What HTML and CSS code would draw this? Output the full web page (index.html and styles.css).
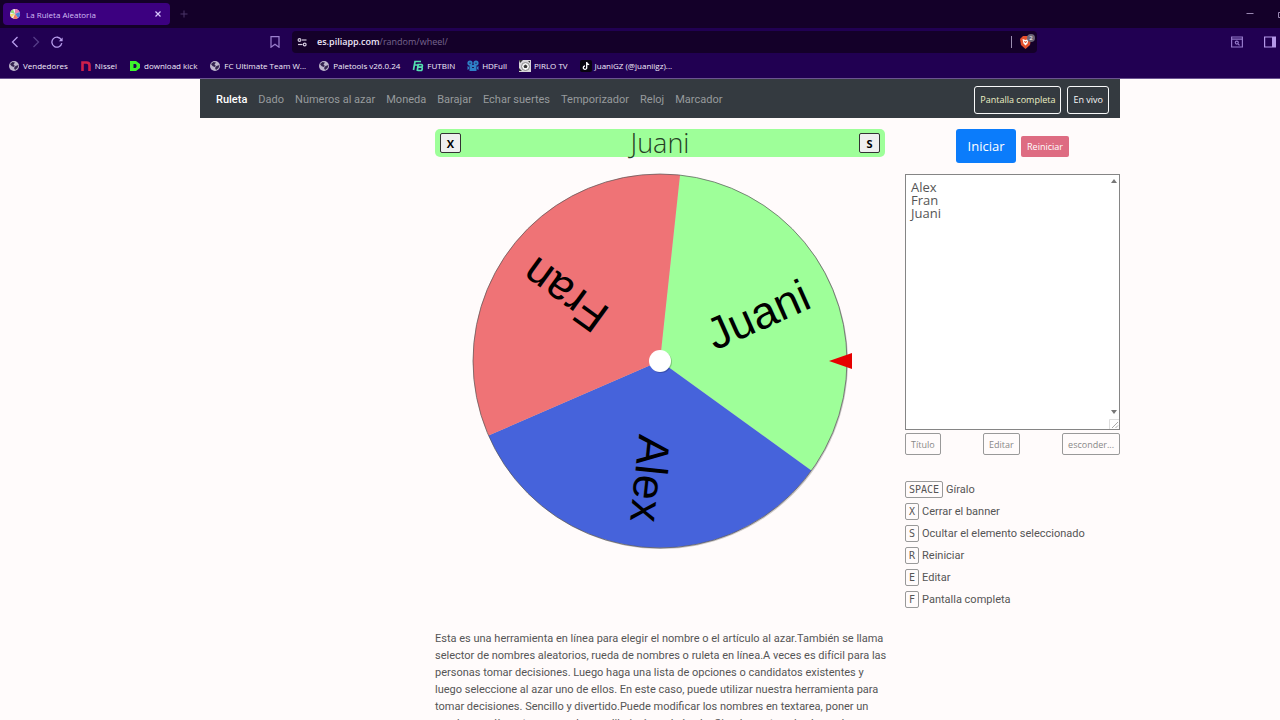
FILE: index.html
```
<!DOCTYPE html>
<html lang="es">
<head>
    <meta charset="UTF-8">
    <meta name="viewport" content="width=device-width, initial-scale=1.0">
    <title>La Ruleta Aleatoria</title>
    <link rel="stylesheet" href="styles.css">
</head>
<body>
    <svg class="symbols" aria-hidden="true">
        <symbol id="globe" viewBox="0 0 12 12">
            <circle cx="6" cy="6" r="5" fill="#bdb4cc"/>
            <path d="M2 4 L4.500 2 L7 2.500 L5.500 4.500 L7 6 L5.500 7 L3.500 6 Z M7.500 6 L10.500 5 L9.500 8 L7 10 L6 8 Z" fill="#33224f"/>
        </symbol>
    </svg>

    <header class="browser">
        <div class="tab-strip">
            <div class="tab">
                <svg class="icon" viewBox="0 0 12 12">
                    <circle cx="6" cy="6" r="5" fill="#f4e9f2"/>
                    <path d="M6 6 L6 1 A5 5 0 0 1 10.500 4 Z" fill="#e87fb0"/>
                    <path d="M6 6 L10.500 4 A5 5 0 0 1 9 10 Z" fill="#4c86d8"/>
                    <path d="M6 6 L9 10 A5 5 0 0 1 4 10.600 Z" fill="#ef7b5c"/>
                    <path d="M6 6 L1.200 4.500 A5 5 0 0 1 4 1.400 Z" fill="#8fdc79"/>
                    <path d="M6 6 L2.500 9.600 A5 5 0 0 1 1 6 Z" fill="#f2dc6b"/>
                </svg>
                <span class="tab-title">La Ruleta Aleatoria</span>
                <button class="icon-button" aria-label="Cerrar pestaña">
                    <svg class="icon-small" viewBox="0 0 8 8"><path d="M1.500 1.500 L6.500 6.500 M6.500 1.500 L1.500 6.500" stroke="#d9c8ff" stroke-width="1.200"/></svg>
                </button>
            </div>
            <button class="icon-button new-tab" aria-label="Nueva pestaña">
                <svg class="icon-small" viewBox="0 0 8 8"><path d="M4 0.500 V7.500 M0.500 4 H7.500" stroke="#4b3568"/></svg>
            </button>
            <div class="window-buttons">
                <button class="icon-button" aria-label="Minimizar">
                    <svg class="icon-small" viewBox="0 0 8 8"><path d="M0.500 3.500 H7.500" stroke="#9886b0"/></svg>
                </button>
                <button class="icon-button" aria-label="Restaurar">
                    <svg class="icon-small" viewBox="0 0 8 8"><path d="M0.500 2.500 H5.500 V7.500 H0.500 Z M2.500 2.500 V0.500 H7.500 V5.500 H5.500" fill="none" stroke="#9886b0"/></svg>
                </button>
            </div>
        </div>

        <div class="toolbar">
            <div class="history">
                <button class="icon-button" aria-label="Atrás">
                    <svg class="icon" viewBox="0 0 12 12"><path d="M8.500 1 L3.500 6 L8.500 11" fill="none" stroke="#b79cec" stroke-width="1.300"/></svg>
                </button>
                <button class="icon-button" aria-label="Adelante">
                    <svg class="icon" viewBox="0 0 12 12"><path d="M3.500 1 L8.500 6 L3.500 11" fill="none" stroke="#553b88" stroke-width="1.300"/></svg>
                </button>
                <button class="icon-button" aria-label="Recargar">
                    <svg class="icon" viewBox="0 0 12 12"><path d="M10.300 3.800 A5 5 0 1 0 10.800 7.200" fill="none" stroke="#b79cec" stroke-width="1.300"/><path d="M11.600 1.600 V5.200 H7.800 Z" fill="#b79cec"/></svg>
                </button>
                <button class="icon-button bookmark-button" aria-label="Guardar marcador">
                    <svg class="icon" viewBox="0 0 12 12"><path d="M2 0.700 H10 V11.200 L6 8.200 L2 11.200 Z" fill="none" stroke="#9c80cf" stroke-width="1.200"/></svg>
                </button>
            </div>
            <div class="address">
                <svg class="icon" viewBox="0 0 12 12" fill="none" stroke="#d4cbdf" stroke-width="1.200">
                    <circle cx="3.500" cy="4" r="1.400"/><path d="M6 4 H10.500"/>
                    <circle cx="8.700" cy="8.500" r="1.400"/><path d="M2 8.500 H6.500"/>
                </svg>
                <span class="url"><strong>es.piliapp.com</strong>/random/wheel/</span>
                <span class="shield">
                    <svg class="shield-icon" viewBox="0 0 16 16">
                        <path d="M4 2 L9 2 L12 5 L11 11 L6.500 15 L2 11 L1 5 Z" fill="#e5502d"/>
                        <path d="M3.500 5 L6.500 6 L9.500 5 L8.500 9.500 L6.500 11.500 L4.500 9.500 Z" fill="#fff"/>
                        <path d="M5.500 7 L6.500 9 L7.500 7" fill="none" stroke="#e5502d"/>
                        <circle cx="12" cy="4" r="4" fill="#6b6676"/>
                        <text x="12" y="6" font-size="6" text-anchor="middle" fill="#fff">2</text>
                    </svg>
                </span>
            </div>
            <div class="toolbar-end">
                <button class="icon-button" aria-label="Buscar en la página">
                    <svg class="icon" viewBox="0 0 12 12" fill="none" stroke="#9478c9" stroke-width="1.200"><path d="M0.600 1 H11.400 V11 H0.600 Z M0.600 3.200 H11.400"/><circle cx="5.800" cy="6.600" r="1.500"/><path d="M7 7.800 L8.500 9.300"/></svg>
                </button>
                <button class="icon-button" aria-label="Panel lateral">
                    <svg class="icon" viewBox="0 0 12 12"><path d="M0.600 1 H11.400 V11 H0.600 Z" fill="none" stroke="#b498e8" stroke-width="1.200"/><path d="M8 1 H12 V11 H8 Z" fill="#b498e8"/></svg>
                </button>
            </div>
        </div>

        <nav class="bookmarks" aria-label="Marcadores">
            <a href="#"><svg class="icon"><use href="#globe"/></svg>Vendedores</a>
            <a href="#"><svg class="icon" viewBox="0 0 12 12"><path d="M2.500 11 V2.500 H6.500 Q9.500 2.500 9.500 5.500 V11" fill="none" stroke="#cf1f4b" stroke-width="2.600"/></svg>Nissei</a>
            <a href="#"><svg class="icon" viewBox="0 0 12 12"><path d="M1 1 H7 L11 4 V8 L7 11 H1 Z M4.500 4 V8 H6.500 L7.500 7 V5 L6.500 4 Z" fill="#3df52c" fill-rule="evenodd"/></svg>download kick</a>
            <a href="#"><svg class="icon"><use href="#globe"/></svg>FC Ultimate Team W...</a>
            <a href="#"><svg class="icon"><use href="#globe"/></svg>Paletools v26.0.24</a>
            <a href="#"><svg class="icon" viewBox="0 0 12 12" fill="none" stroke="#53e0b0" stroke-width="1.700"><path d="M1.500 10 L3 1.500 H9 M2 5 H6 M5.200 11 L6.200 4.500 H9.500 Q11 5 10 7.200 H6.500 M9.500 7.200 Q11 8 9.500 10.500 H5.500"/></svg>FUTBIN</a>
            <a href="#"><svg class="icon" viewBox="0 0 12 12" fill="#2e80c6"><circle cx="3" cy="3" r="2.600"/><circle cx="9" cy="3" r="2.600"/><path d="M2.500 5 H9.500 V11 H2.500 Z M0.500 6 L2 7 V9 L0.500 10 Z M11.500 6 L10 7 V9 L11.500 10 Z"/><path d="M3 2.500 V4 M9 2.500 V4 M5 7.500 H7" stroke="#1d1950" fill="none"/></svg>HDFull</a>
            <a href="#"><svg class="icon" viewBox="0 0 12 12"><path d="M0 0 H12 V12 H0 Z" fill="#d8d5da"/><circle cx="6.500" cy="6.500" r="4" fill="#f5f5f5" stroke="#888"/><path d="M6.500 4.500 L8.500 6 L7.700 8 H5.300 L4.500 6 Z M0 0 H4 L1 3 Z M0 8 L3 11 H0 Z M9 1 L11 3 V1 Z" fill="#333"/></svg>PIRLO TV</a>
            <a href="#"><svg class="icon" viewBox="0 0 12 12"><rect width="12" height="12" rx="2" fill="#08040e"/><path d="M6.700 2 V7.700 A1.700 1.700 0 1 1 5 6 M6.700 2.500 Q7.300 4.500 9.200 4.600" fill="none" stroke="#fff" stroke-width="1.300"/></svg>JuaniGZ (@juaniigz)...</a>
        </nav>
    </header>

    <div class="page">
        <div class="container">
            <nav class="navbar">
                <a class="active" href="#">Ruleta</a>
                <a href="#">Dado</a>
                <a href="#">Números al azar</a>
                <a href="#">Moneda</a>
                <a href="#">Barajar</a>
                <a href="#">Echar suertes</a>
                <a href="#">Temporizador</a>
                <a href="#">Reloj</a>
                <a href="#">Marcador</a>
                <div class="navbar-buttons">
                    <button class="btn-nav highlight">Pantalla completa</button>
                    <button class="btn-nav">En vivo</button>
                </div>
            </nav>

            <main class="content">
                <section class="wheel-column">
                    <div class="banner">
                        <button class="btn-key">X</button>
                        <span class="winner">Juani</span>
                        <button class="btn-key">S</button>
                    </div>

                    <!-- 3 sectors of 120deg, the wheel has stopped at -84deg -->
                    <svg class="wheel" viewBox="0 0 450 376">
                        <circle cx="226" cy="189" r="187" fill="#00000033"/>
                        <g transform="translate(225 188)">
                            <path d="M0 0 L20 -186 A187 187 0 0 1 151.300 109.500 Z" fill="#9eff99"/>
                            <path d="M0 0 L151.300 109.500 A187 187 0 0 1 -171.500 74.600 Z" fill="#4663db"/>
                            <path d="M0 0 L-171.500 74.600 A187 187 0 0 1 20 -186 Z" fill="#ef7376"/>
                            <circle r="187" fill="none" stroke="#555" stroke-width="0.700"/>
                            <g class="names">
                                <text transform="rotate(-24)" x="162" y="13">Juani</text>
                                <text transform="rotate(96)" x="162" y="13">Alex</text>
                                <text transform="rotate(216)" x="162" y="13">Fran</text>
                            </g>
                            <circle cx="1" cy="1" r="11" fill="#00000033"/>
                            <circle r="11" fill="#fff"/>
                            <path d="M169 0 L192 -8 V8 Z" fill="#e60000"/>
                        </g>
                    </svg>

                    <p class="description">Esta es una herramienta en línea para elegir el nombre o el artículo al azar.También se llama selector de nombres aleatorios, rueda de nombres o ruleta en línea.A veces es difícil para las personas tomar decisiones. Luego haga una lista de opciones o candidatos existentes y luego seleccione al azar uno de ellos. En este caso, puede utilizar nuestra herramienta para tomar decisiones. Sencillo y divertido.Puede modificar los nombres en textarea, poner un nombre por línea, tomar nombres y dibujará en el círculo. Simplemente pulse la rueda.</p>
                </section>

                <aside class="controls">
                    <div class="actions">
                        <button class="btn-start">Iniciar</button>
                        <button class="btn-reset">Reiniciar</button>
                    </div>
                    <div class="names-box">
                        <textarea aria-label="Nombres" spellcheck="false">Alex
Fran
Juani</textarea>
                        <svg class="scroll-arrow up" viewBox="0 0 6 4"><path d="M0 4 L3 0 L6 4 Z" fill="#777"/></svg>
                        <svg class="scroll-arrow down" viewBox="0 0 6 4"><path d="M0 0 L3 4 L6 0 Z" fill="#777"/></svg>
                        <svg class="grip" viewBox="0 0 10 10"><path d="M0.500 10 V0.500 H10" fill="none" stroke="#ddd"/><path d="M3 9 L9 3 M6.500 9 L9 6.500" stroke="#aaa"/></svg>
                    </div>
                    <div class="tools">
                        <button class="btn-tool">Título</button>
                        <button class="btn-tool">Editar</button>
                        <button class="btn-tool">esconder...</button>
                    </div>
                    <ul class="shortcuts">
                        <li><kbd>SPACE</kbd>Gíralo</li>
                        <li><kbd>X</kbd>Cerrar el banner</li>
                        <li><kbd>S</kbd>Ocultar el elemento seleccionado</li>
                        <li><kbd>R</kbd>Reiniciar</li>
                        <li><kbd>E</kbd>Editar</li>
                        <li><kbd>F</kbd>Pantalla completa</li>
                    </ul>
                </aside>
            </main>
        </div>
    </div>
</body>
</html>
```
FILE: styles.css
```
* {
    box-sizing: border-box;
}

body {
    margin: 0;
    font-family: Roboto, "Open Sans", sans-serif;
    font-size: 11px;
    color: #555;
    background: #fffbfb;
}

button {
    font-family: "Open Sans", sans-serif;
    cursor: pointer;
}

a {
    text-decoration: none;
}

.symbols {
    position: absolute;
    width: 0;
    height: 0;
}

/* browser window */
.browser {
    overflow: hidden;
    font-family: "Open Sans", sans-serif;
    background: #210052;
    border-bottom: 1px solid #6b5590;
}

.icon {
    display: block;
    flex: none;
    width: 12px;
    height: 12px;
}

.icon-small {
    display: block;
    width: 8px;
    height: 8px;
}

.icon-button {
    padding: 0;
    border: none;
    background: none;
}

.tab-strip {
    display: flex;
    align-items: center;
    height: 28px;
    padding-left: 3px;
    background: #140029;
}

.tab {
    display: flex;
    align-items: center;
    gap: 5px;
    width: 167px;
    height: 22px;
    padding: 0 8px 0 6px;
    border-radius: 4px;
    background: #3c0080;
}

.tab-title {
    flex: 1;
    font-size: 8px;
    color: #d3bdf5;
}

.new-tab {
    margin-left: 10px;
}

.window-buttons {
    display: flex;
    gap: 24px;
    margin: 0 -6px 0 auto;
}

.toolbar {
    display: grid;
    grid-template-columns: 292px 1fr 243px;
    align-items: center;
    height: 27px;
}

.history {
    display: flex;
    gap: 9px;
    padding: 0 11px 0 9px;
}

.bookmark-button {
    margin-left: auto;
}

.address {
    display: flex;
    align-items: center;
    gap: 9px;
    height: 22px;
    padding: 0 2px 0 4px;
    border-radius: 4px;
    background: #140029;
}

.url {
    font-size: 9px;
    color: #77658f;
}

.url strong {
    font-weight: 600;
    color: #eee6f8;
}

.shield {
    margin-left: auto;
    padding-left: 7px;
    border-left: 1px solid #9c8eb0;
}

.shield-icon {
    display: block;
    width: 16px;
    height: 16px;
    margin: -2px 0;
}

.toolbar-end {
    display: flex;
    justify-content: flex-end;
    gap: 21px;
    padding-right: 4px;
}

.bookmarks {
    display: flex;
    gap: 12px;
    height: 23px;
    padding: 0 8px 2px;
}

.bookmarks a {
    display: flex;
    align-items: center;
    gap: 3px;
    white-space: nowrap;
    font-size: 8px;
    font-weight: 500;
    color: #f3edfb;
}

/* page */
.page {
    padding-left: 40px;
}

.container {
    max-width: 920px;
    margin: 0 auto;
}

.navbar {
    display: flex;
    align-items: center;
    gap: 11px;
    height: 39px;
    padding: 2px 11px 0 16px;
    background: #343a40;
}

.navbar a {
    white-space: nowrap;
    color: #979a9d;
}

.navbar .active {
    font-weight: 500;
    color: #fff;
}

.navbar-buttons {
    display: flex;
    gap: 6px;
    margin-left: auto;
}

.btn-nav {
    height: 28px;
    padding: 0 5px;
    border: 1px solid #f8f9fa;
    border-radius: 3px;
    background: transparent;
    white-space: nowrap;
    font-size: 9px;
    font-weight: 500;
    color: #f8f9fa;
}

.highlight {
    color: #ecefc4;
}

.content {
    display: grid;
    grid-template-columns: 450px 215px;
    justify-content: end;
    gap: 20px;
    padding-top: 11px;
}

.banner {
    display: flex;
    align-items: center;
    justify-content: space-between;
    height: 28px;
    padding: 0 5px;
    border-radius: 5px;
    background: #9eff99;
}

.winner {
    font-family: "Open Sans", sans-serif;
    font-size: 27px;
    font-weight: 300;
    line-height: 28px;
    color: #254025;
}

.btn-key {
    width: 21px;
    height: 20px;
    padding: 0;
    border: 1px solid #333;
    border-radius: 2px;
    background: #efefef;
    font-size: 11px;
    font-weight: 700;
    color: #000;
}

.wheel {
    display: block;
    width: 100%;
    margin-top: 16px;
}

.names {
    font-family: "Liberation Sans", Arial, sans-serif;
    font-size: 45px;
    text-anchor: end;
    fill: #000;
}

.description {
    margin: 81px -4px 0 0;
    line-height: 17px;
}

.actions {
    display: flex;
    align-items: center;
    justify-content: center;
    gap: 5px;
}

.btn-start {
    width: 60px;
    height: 34px;
    padding: 0;
    border: none;
    border-radius: 3px;
    background: #0b7cfb;
    font-size: 13px;
    color: #fff;
}

.btn-reset {
    width: 48px;
    height: 21px;
    padding: 0;
    border: none;
    border-radius: 2px;
    background: #de6c82;
    font-size: 9px;
    color: #fff;
}

.names-box {
    position: relative;
    margin-top: 11px;
}

textarea {
    display: block;
    width: 100%;
    height: 256px;
    padding: 6px 5px;
    border: 1px solid #858585;
    resize: none;
    background: #fff;
    font-family: "Open Sans", sans-serif;
    font-size: 13px;
    line-height: 13px;
    color: #555;
}

.scroll-arrow {
    position: absolute;
    right: 3px;
    width: 6px;
    height: 4px;
}

.up {
    top: 5px;
}

.down {
    bottom: 16px;
}

.grip {
    position: absolute;
    right: 1px;
    bottom: 1px;
    width: 10px;
    height: 10px;
}

.tools {
    display: flex;
    justify-content: space-between;
    margin-top: 3px;
}

.btn-tool {
    height: 22px;
    padding: 0 5px;
    border: 1px solid #999;
    border-radius: 2px;
    background: transparent;
    font-size: 9px;
    color: #888;
}

.shortcuts {
    margin: 23px 0 0;
    padding: 0;
    list-style: none;
}

.shortcuts li {
    display: flex;
    align-items: center;
    gap: 3px;
    height: 22px;
    white-space: nowrap;
}

kbd {
    padding: 0 3px;
    border: 1px solid #999;
    border-radius: 2px;
    font-family: "DejaVu Sans Mono", monospace;
    font-size: 10px;
    line-height: 15px;
}
```
